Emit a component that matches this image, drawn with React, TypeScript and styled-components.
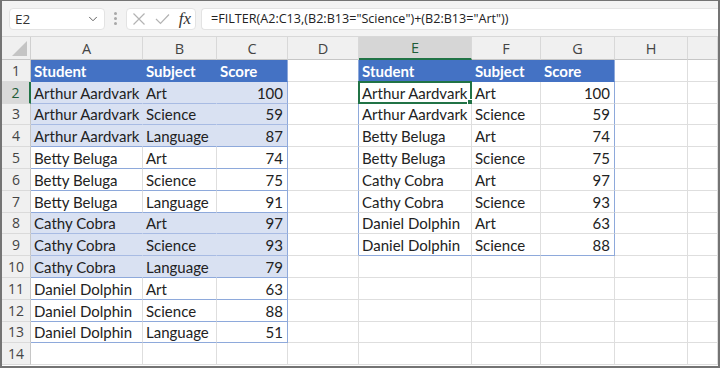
import React from "react";
import styled, { createGlobalStyle } from "styled-components";
import { ChevronDown } from "lucide-react";

const GlobalStyle = createGlobalStyle`
  * { box-sizing: border-box; }
  body {
    margin: 0;
    background: #ffffff;
    font-family: "Open Sans", "Noto Sans", sans-serif;
  }
`;

const BLUE = "#4472c4";
const BAND = "#d9e1f2";
const TABLE_LINE = "#8ea9db";
const BAND_LINE = "#a8bbe3";
const GRID = "#dedede";
const GREEN = "#217346";

const Frame = styled.div`
  width: 720px;
  height: 368px;
  border: 2px solid #747474;
  border-top-width: 1px;
  overflow: hidden;
  background: #fff;
`;

const FormulaBar = styled.div`
  display: flex;
  align-items: center;
  height: 36px;
  padding: 0 0 0 7px;
  background: #f3f3f3;
  border-bottom: 1px solid #d8d8d8;
`;

const NameBox = styled.div`
  display: flex;
  align-items: center;
  justify-content: space-between;
  width: 96px;
  height: 22px;
  padding: 0 4px 0 5px;
  background: #fff;
  border: 1px solid #e3e3e3;
  border-radius: 4px;
  font-size: 13.5px;
  color: #333;
`;

const Grip = styled.div`
  display: flex;
  flex-direction: column;
  gap: 2px;
  margin: 0 9px 0 9px;
  span {
    width: 3px;
    height: 3px;
    border-radius: 50%;
    background: #a8a8a8;
  }
`;

const FxBox = styled.div`
  display: flex;
  align-items: center;
  justify-content: space-between;
  width: 70px;
  height: 22px;
  padding: 0 2px 0 5px;
  background: #fff;
  border: 1px solid #e3e3e3;
  border-radius: 4px;
`;

const FxText = styled.span`
  font-family: "Liberation Serif", serif;
  font-style: italic;
  font-size: 17px;
  color: #333;
  padding-right: 2px;
`;

const FormulaInput = styled.div`
  flex: 1;
  display: flex;
  align-items: center;
  height: 22px;
  margin-left: 5px;
  padding-left: 9px;
  background: #fff;
  border: 1px solid #e3e3e3;
  border-right: none;
  border-radius: 4px 0 0 4px;
  font-size: 12.6px;
  color: #222;
  white-space: nowrap;
`;

const Sheet = styled.div`
  display: grid;
  grid-template-columns: 29px 112px 74px 71px 71px 113px 69px 74px 73px 1fr;
  grid-template-rows: 23px repeat(14, 21.8px);
`;

const Corner = styled.div`
  position: relative;
  background: #f0f0f0;
  border-right: 1px solid #d0d0d0;
  border-bottom: 1px solid #c6c6c6;
  &::after {
    content: "";
    position: absolute;
    right: 3px;
    bottom: 3px;
    border-style: solid;
    border-width: 0 0 15px 15px;
    border-color: transparent transparent #c4c4c4 transparent;
  }
`;

const ColHead = styled.div<{ $active?: boolean }>`
  display: flex;
  align-items: center;
  justify-content: center;
  background: ${(p) => (p.$active ? "#d6d6d6" : "#f0f0f0")};
  border-right: 1px solid #d8d8d8;
  border-bottom: ${(p) => (p.$active ? `2px solid ${GREEN}` : "1px solid #c6c6c6")};
  font-size: 14.5px;
  color: ${(p) => (p.$active ? "#1e5c38" : "#444")};
`;

const RowHead = styled.div<{ $active?: boolean }>`
  display: flex;
  align-items: center;
  justify-content: center;
  background: ${(p) => (p.$active ? "#d9d9d9" : "#f0f0f0")};
  border-right: ${(p) => (p.$active ? `2px solid ${GREEN}` : "1px solid #c6c6c6")};
  border-bottom: 1px solid #dadada;
  font-size: 14px;
  color: ${(p) => (p.$active ? "#1e5c38" : "#444")};
`;

type CellProps = {
  $bg: string;
  $color: string;
  $bold: boolean;
  $right: boolean;
  $br: string;
  $bb: string;
  $selected: boolean;
};

const Cell = styled.div<CellProps>`
  position: relative;
  display: flex;
  align-items: center;
  justify-content: ${(p) => (p.$right ? "flex-end" : "flex-start")};
  padding: 1px 4px 0 3px;
  background: ${(p) => p.$bg};
  border-right: 1px solid ${(p) => p.$br};
  border-bottom: 1px solid ${(p) => p.$bb};
  font-family: "Lato", "Liberation Sans", sans-serif;
  font-size: 15px;
  font-weight: ${(p) => (p.$bold ? 700 : 400)};
  color: ${(p) => p.$color};
  white-space: nowrap;
  overflow: visible;
  ${(p) =>
    p.$selected &&
    `
    &::before {
      content: "";
      position: absolute;
      left: -1px;
      top: -1px;
      right: -1px;
      bottom: -1px;
      border: 2px solid ${GREEN};
    }
    &::after {
      content: "";
      position: absolute;
      right: -4px;
      bottom: -4px;
      width: 6px;
      height: 6px;
      background: ${GREEN};
      border: 1px solid #fff;
    }
  `}
`;

type Row = [string, string, number];

const source: Row[] = [
  ["Arthur Aardvark", "Art", 100],
  ["Arthur Aardvark", "Science", 59],
  ["Arthur Aardvark", "Language", 87],
  ["Betty Beluga", "Art", 74],
  ["Betty Beluga", "Science", 75],
  ["Betty Beluga", "Language", 91],
  ["Cathy Cobra", "Art", 97],
  ["Cathy Cobra", "Science", 93],
  ["Cathy Cobra", "Language", 79],
  ["Daniel Dolphin", "Art", 63],
  ["Daniel Dolphin", "Science", 88],
  ["Daniel Dolphin", "Language", 51],
];

const filtered = source.filter((r) => r[1] === "Science" || r[1] === "Art");
const banded = [0, 1, 2, 6, 7, 8];
const headers = ["Student", "Subject", "Score"];
const letters = ["A", "B", "C", "D", "E", "F", "G", "H", ""];

type CellData = {
  text: string;
  bg: string;
  color: string;
  bold: boolean;
  right: boolean;
  br: string;
  bb: string;
  selected: boolean;
};

function buildCell(r: number, c: number): CellData {
  const cell: CellData = {
    text: "",
    bg: "#fff",
    color: "#222",
    bold: false,
    right: false,
    br: GRID,
    bb: GRID,
    selected: false,
  };

  // source table, A1:C13
  if (c <= 2 && r <= 12) {
    if (r === 0) {
      cell.text = headers[c];
      cell.bg = BLUE;
      cell.color = "#fff";
      cell.bold = true;
      cell.br = BLUE;
      cell.bb = BLUE;
    } else {
      const row = source[r - 1];
      const band = banded.includes(r - 1);
      cell.text = String(row[c]);
      cell.right = c === 2;
      cell.bg = band ? BAND : "#fff";
      cell.br = band ? BAND : GRID;
      const nextBand = banded.includes(r);
      cell.bb = band && nextBand ? BAND_LINE : TABLE_LINE;
    }
    if (c === 2) cell.br = TABLE_LINE;
  }

  // left edge of the spill table
  if (c === 3 && r <= 8) cell.br = TABLE_LINE;

  // spill result, E1:G9
  if (c >= 4 && c <= 6 && r <= 8) {
    const k = c - 4;
    if (r === 0) {
      cell.text = headers[k];
      cell.bg = BLUE;
      cell.color = "#fff";
      cell.bold = true;
      cell.br = BLUE;
      cell.bb = BLUE;
    } else {
      cell.text = String(filtered[r - 1][k]);
      cell.right = k === 2;
      cell.bb = r === 8 ? TABLE_LINE : GRID;
      cell.selected = r === 1 && k === 0;
    }
    if (k === 2) cell.br = TABLE_LINE;
  }
  return cell;
}

const XIcon = () => (
  <svg width="14" height="14" viewBox="0 0 14 14">
    <path d="M1.5 1.5 L12.5 12.5 M12.5 1.5 L1.5 12.5" stroke="#b3b3b3" strokeWidth="1.2" fill="none" />
  </svg>
);

const CheckIcon = () => (
  <svg width="15" height="12" viewBox="0 0 15 12">
    <path d="M1 6 L5.5 10.5 L14 1.5" stroke="#b3b3b3" strokeWidth="1.2" fill="none" />
  </svg>
);

export default function App() {
  const rows = Array.from({ length: 14 }, (_, r) => r);
  const cols = Array.from({ length: 9 }, (_, c) => c);
  return (
    <>
      <GlobalStyle />
      <Frame>
        <FormulaBar>
          <NameBox>
            E2
            <ChevronDown size={14} strokeWidth={1.6} color="#555" />
          </NameBox>
          <Grip>
            <span />
            <span />
            <span />
          </Grip>
          <FxBox>
            <XIcon />
            <CheckIcon />
            <FxText>fx</FxText>
          </FxBox>
          <FormulaInput>=FILTER(A2:C13,(B2:B13="Science")+(B2:B13="Art"))</FormulaInput>
        </FormulaBar>
        <Sheet>
          <Corner />
          {letters.map((l, i) => (
            <ColHead key={i} $active={l === "E"}>
              {l}
            </ColHead>
          ))}
          {rows.map((r) => (
            <React.Fragment key={r}>
              <RowHead $active={r === 1}>{r + 1}</RowHead>
              {cols.map((c) => {
                const d = buildCell(r, c);
                return (
                  <Cell
                    key={c}
                    $bg={d.bg}
                    $color={d.color}
                    $bold={d.bold}
                    $right={d.right}
                    $br={d.br}
                    $bb={d.bb}
                    $selected={d.selected}
                  >
                    {d.text}
                  </Cell>
                );
              })}
            </React.Fragment>
          ))}
        </Sheet>
      </Frame>
    </>
  );
}
